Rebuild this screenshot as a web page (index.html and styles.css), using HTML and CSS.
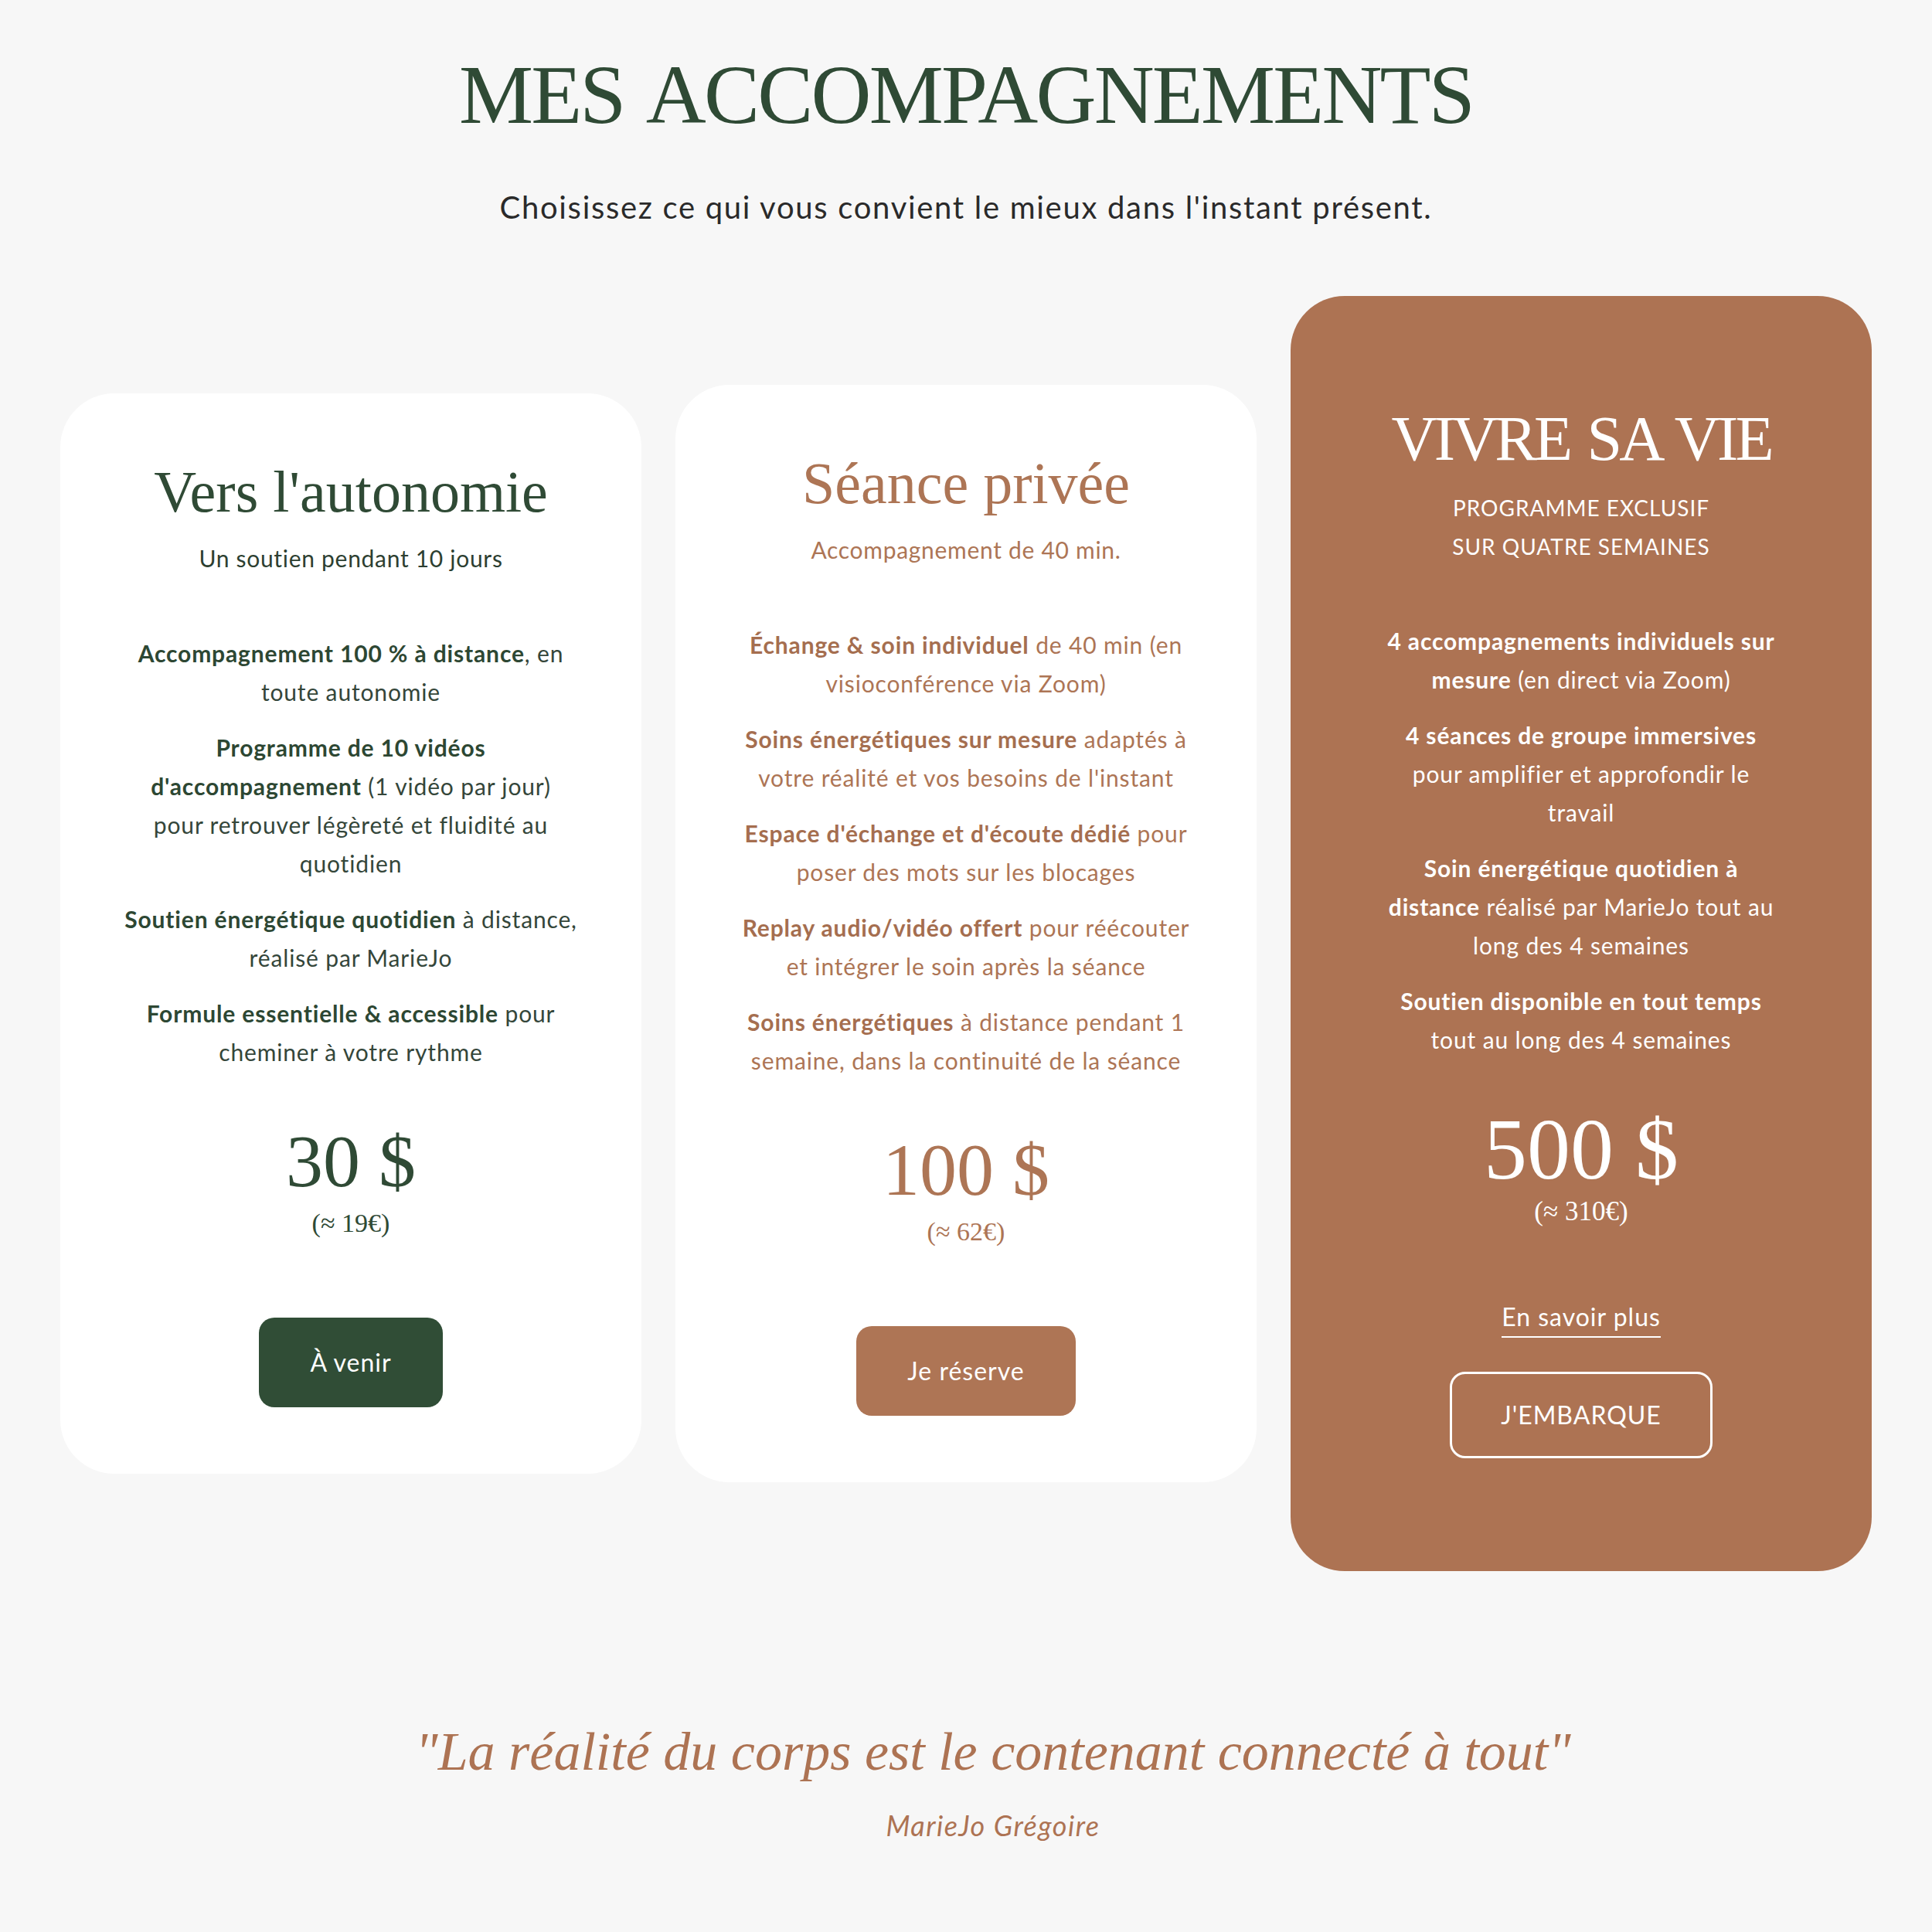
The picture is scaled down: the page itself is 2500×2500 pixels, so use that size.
FILE: index.html
```html
<!DOCTYPE html>
<html lang="fr">
<head>
<meta charset="utf-8">
<title>Mes accompagnements</title>
<link rel="stylesheet" href="styles.css">
</head>
<body>
<main class="page">
  <header class="intro">
    <h1 class="intro-title">MES ACCOMPAGNEMENTS</h1>
    <p class="intro-sub">Choisissez ce qui vous convient le mieux dans l'instant présent.</p>
  </header>

  <section class="offers">
    <article class="card card-green">
      <h2 class="card-title">Vers l'autonomie</h2>
      <p class="card-sub">Un soutien pendant 10 jours</p>
      <div class="features">
        <p><b>Accompagnement 100 % à distance</b>, en<br>toute autonomie</p>
        <p><b>Programme de 10 vidéos</b><br><b>d'accompagnement</b> (1 vidéo par jour)<br>pour retrouver légèreté et fluidité au<br>quotidien</p>
        <p><b>Soutien énergétique quotidien</b> à distance,<br>réalisé par MarieJo</p>
        <p><b>Formule essentielle &amp; accessible</b> pour<br>cheminer à votre rythme</p>
      </div>
      <div class="price">30 $</div>
      <div class="price-eur">(≈ 19€)</div>
      <a class="btn btn-green" href="#">À venir</a>
    </article>

    <article class="card card-brown">
      <h2 class="card-title">Séance privée</h2>
      <p class="card-sub">Accompagnement de 40 min.</p>
      <div class="features">
        <p><b>Échange &amp; soin individuel</b> de 40 min (en<br>visioconférence via Zoom)</p>
        <p><b>Soins énergétiques sur mesure</b> adaptés à<br>votre réalité et vos besoins de l'instant</p>
        <p><b>Espace d'échange et d'écoute dédié</b> pour<br>poser des mots sur les blocages</p>
        <p><b>Replay audio/vidéo offert</b> pour réécouter<br>et intégrer le soin après la séance</p>
        <p><b>Soins énergétiques</b> à distance pendant 1<br>semaine, dans la continuité de la séance</p>
      </div>
      <div class="price">100 $</div>
      <div class="price-eur">(≈ 62€)</div>
      <a class="btn btn-brown" href="#">Je réserve</a>
    </article>

    <article class="card card-featured">
      <h2 class="card-title">VIVRE SA VIE</h2>
      <p class="card-sub">PROGRAMME EXCLUSIF<br>SUR QUATRE SEMAINES</p>
      <div class="features">
        <p><b>4 accompagnements individuels sur</b><br><b>mesure</b> (en direct via Zoom)</p>
        <p><b>4 séances de groupe immersives</b><br>pour amplifier et approfondir le<br>travail</p>
        <p><b>Soin énergétique quotidien à</b><br><b>distance</b> réalisé par MarieJo tout au<br>long des 4 semaines</p>
        <p><b>Soutien disponible en tout temps</b><br>tout au long des 4 semaines</p>
      </div>
      <div class="price">500 $</div>
      <div class="price-eur">(≈ 310€)</div>
      <a class="more-link" href="#">En savoir plus</a>
      <a class="btn btn-outline" href="#">J'EMBARQUE</a>
    </article>
  </section>

  <blockquote class="quote">
    <p class="quote-text">"La réalité du corps est le contenant connecté à tout"</p>
    <p class="quote-author">MarieJo Grégoire</p>
  </blockquote>
</main>
</body>
</html>
```

FILE: styles.css
```css
html {
  background: #f7f7f7;
}

body {
  margin: 0;
  background: #f7f7f7;
  font-family: "Lato", "Open Sans", sans-serif;
}

.page {
  padding-top: 58px;
}

.intro {
  text-align: center;
}

.intro-title {
  margin: 0;
  font-family: "Liberation Serif", serif;
  font-weight: 400;
  font-size: 108px;
  line-height: 130px;
  letter-spacing: -2.8px;
  word-spacing: 10px;
  color: #2f4a35;
}

.intro-sub {
  margin: 56px 0 0;
  font-size: 40px;
  line-height: 49px;
  letter-spacing: 1.7px;
  color: #2a2a2a;
}

.offers {
  max-width: 2344px;
  margin: 90px auto 0;
  display: grid;
  grid-template-columns: repeat(3, 1fr);
  gap: 44px;
  align-items: center;
}

.card {
  display: flex;
  flex-direction: column;
  align-items: center;
  text-align: center;
  border-radius: 70px;
  background: #ffffff;
  padding: 82px 40px 86px;
}

.card-title {
  margin: 0;
  font-family: "Liberation Serif", serif;
  font-weight: 400;
  font-size: 76px;
  line-height: 91px;
}

.card-sub {
  margin: 15px 0 0;
  font-size: 30px;
  line-height: 50px;
  letter-spacing: 0.7px;
}

.features {
  margin-top: 73px;
  display: flex;
  flex-direction: column;
  gap: 22px;
}

.features p {
  margin: 0;
  font-size: 30px;
  line-height: 50px;
  letter-spacing: 0.85px;
  white-space: nowrap;
}

.features b {
  font-weight: 700;
}

.price {
  margin-top: 69px;
  font-family: "Liberation Serif", serif;
  font-size: 96px;
  line-height: 96px;
}

.price-eur {
  margin-top: 11px;
  font-family: "Liberation Serif", serif;
  font-size: 34px;
  line-height: 41px;
}

.btn {
  display: inline-block;
  margin-top: 102px;
  padding: 39px 66px;
  border-radius: 20px;
  font-size: 32px;
  line-height: 38px;
  letter-spacing: 1px;
  text-decoration: none;
}

/* Card 1 : green */
.card-green .card-title,
.card-green .price,
.card-green .price-eur {
  color: #2f4a35;
}

.card-green .card-sub {
  color: #2d3f31;
}

.card-green .features p {
  color: #34463a;
}

.card-green .features b {
  color: #2d4733;
}

.btn-green {
  background: #304d36;
  color: #ffffff;
}

/* Card 2 : brown */
.card-brown .card-title,
.card-brown .card-sub,
.card-brown .price,
.card-brown .price-eur {
  color: #ad7555;
}

.card-brown .features p {
  color: #ad7555;
}

.card-brown .features b {
  color: #a56e4f;
}

.btn-brown {
  background: #ae7555;
  color: #ffffff;
}

/* Card 3 : featured */
.card-featured {
  background: #ad7353;
  color: #ffffff;
  padding: 136px 40px 146px;
}

.card-featured .card-title {
  font-size: 82px;
  line-height: 98px;
  letter-spacing: -4px;
  word-spacing: 6px;
}

.card-featured .card-sub {
  font-size: 28px;
  line-height: 50px;
  letter-spacing: 1px;
}

.card-featured .features {
  margin-top: 72px;
}

.card-featured .price {
  margin-top: 61px;
  font-size: 112px;
  line-height: 112px;
}

.card-featured .price-eur {
  margin-top: 4px;
  font-size: 35px;
  line-height: 42px;
}

.more-link {
  margin-top: 96px;
  padding-bottom: 6px;
  border-bottom: 2px solid #ffffff;
  color: #ffffff;
  font-size: 32px;
  line-height: 38px;
  letter-spacing: 1px;
  text-decoration: none;
}

.card-featured .btn-outline {
  margin-top: 44px;
  padding: 34px 63px;
  border: 3px solid #ffffff;
  color: #ffffff;
}

/* Quote */
.quote {
  margin: 192px 0 0;
  padding-left: 70px;
  text-align: center;
  color: #ad7353;
}

.quote-text {
  margin: 0;
  font-family: "Liberation Serif", serif;
  font-style: italic;
  font-size: 70px;
  line-height: 84px;
}

.quote-author {
  margin: 33px 0 0;
  font-style: italic;
  font-size: 36px;
  line-height: 41px;
  letter-spacing: 1.5px;
}
```
